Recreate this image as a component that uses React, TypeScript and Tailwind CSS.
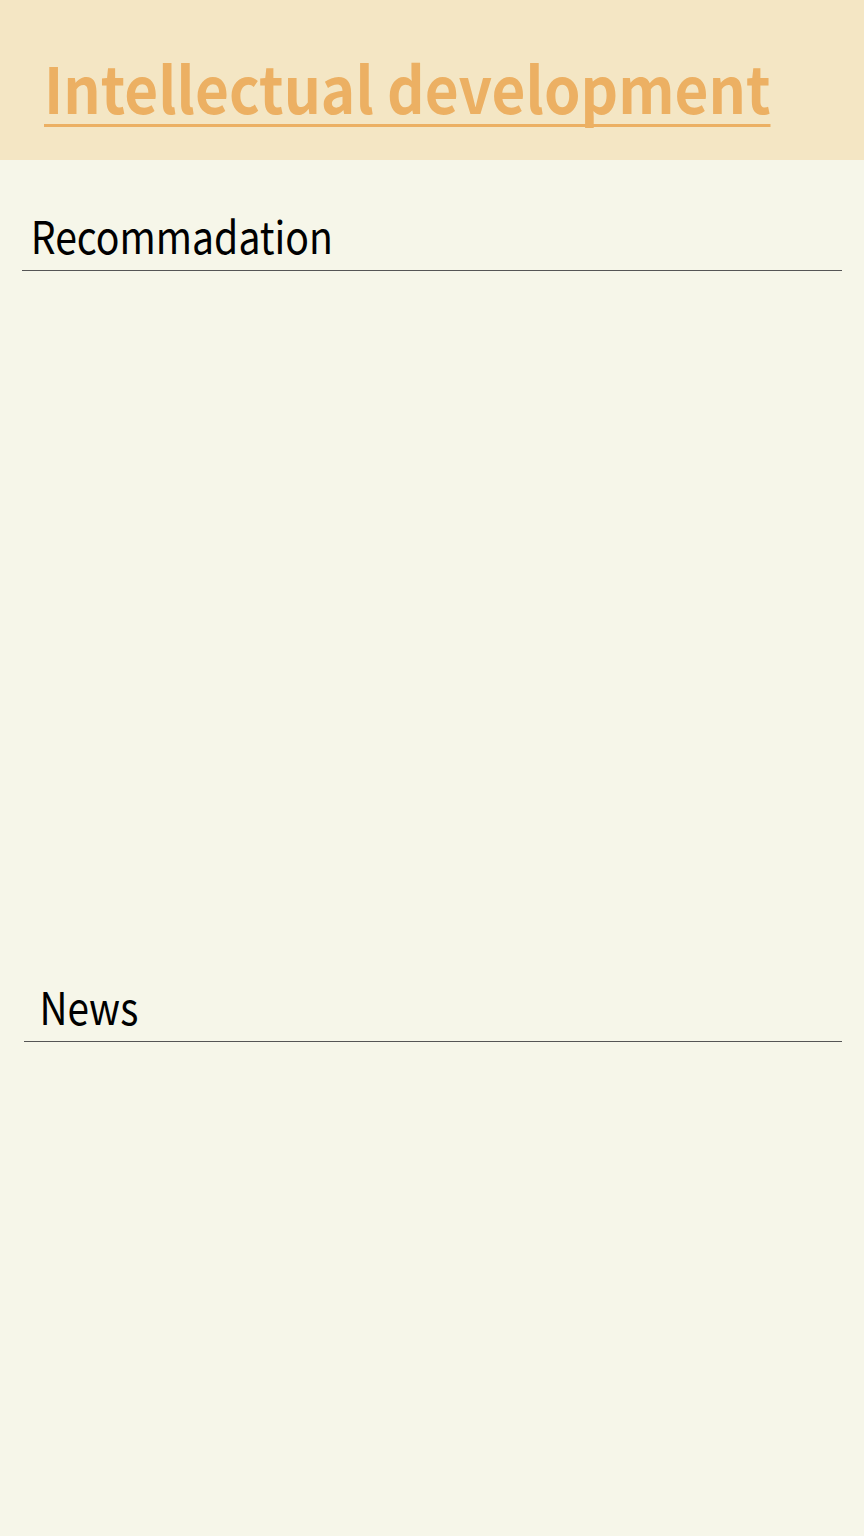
import React from "react";

export default function App() {
  const font = { fontFamily: '"Noto Sans CJK JP", "Noto Sans", sans-serif' };
  return (
    <div className="min-h-[1536px] w-full bg-[#f6f6e9]" style={font}>
      <header className="h-[160px] bg-[#f4e6c4] pl-[44px] pt-[46px]">
        <h1 className="inline-block origin-left scale-x-[0.913] text-[64px] font-bold leading-[80px] text-[#ecb063] underline decoration-[3px] underline-offset-[10px] [text-decoration-skip-ink:none]">
          Intellectual development
        </h1>
      </header>
      <section className="mx-[22px] mt-[50px] h-[61px] border-b border-[#555]">
        <h2 className="inline-block origin-left scale-x-[0.87] pl-[10px] text-[45px] leading-[50px] text-black">Recommadation</h2>
      </section>
      <div className="h-[710px]" />
      <section className="ml-[24px] mr-[22px] h-[61px] border-b border-[#555]">
        <h2 className="inline-block origin-left scale-x-[0.86] pl-[18px] text-[45px] leading-[50px] text-black">News</h2>
      </section>
    </div>
  );
}
